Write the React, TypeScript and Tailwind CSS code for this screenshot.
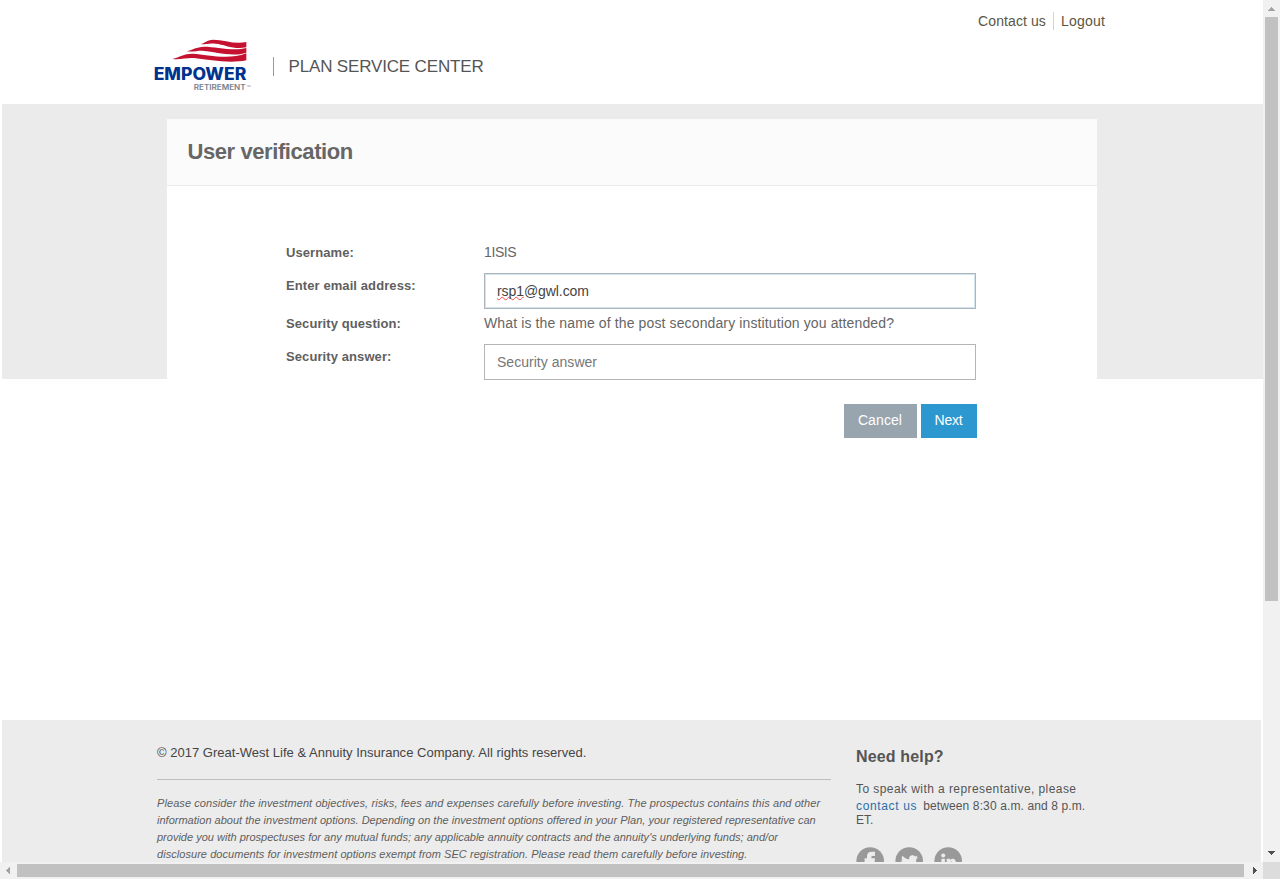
import type { ReactNode } from "react";

function Logo() {
  return (
    <svg width="104" height="56" viewBox="0 0 312 168" aria-label="Empower Retirement">
      <g fill="#c41230" transform="translate(-3 -3)">
        <path d="M145 24C162 21 162 12 184 11C216 11 248 26 283 18V34C246 42 218 25 190 23C174 22 164 26 145 24Z" />
        <path d="M104 46C124 41 132 33 156 32C192 32 242 46 283 36V50C242 64 188 47 156 45C138 43 126 49 104 46Z" />
        <path d="M61 69C84 63 94 53 122 53C166 55 226 74 283 52V73C232 84 170 71 132 67C106 64 88 72 61 69Z" />
      </g>
      <text x="2" y="130" fill="#00338d" className="font-[Inter] text-[50px] font-extrabold" textLength="278" lengthAdjust="spacingAndGlyphs">EMPOWER</text>
      <text x="122" y="159" fill="#76818d" className="font-[Inter] text-[23px] font-semibold" textLength="156" lengthAdjust="spacingAndGlyphs">RETIREMENT</text>
      <text x="281" y="149" fill="#76818d" className="font-[Inter] text-[8px]">TM</text>
    </svg>
  );
}

function Label({ children }: { children: ReactNode }) {
  return <div className="w-[198px] shrink-0 whitespace-nowrap pt-px text-[13px] font-bold leading-5 tracking-[0.09px] text-[#5f5f5f]">{children}</div>;
}

function Arrow({ points, color }: { points: string; color: string }) {
  return (
    <svg width="17" height="17" viewBox="0 0 17 17" className="shrink-0" shapeRendering="crispEdges">
      <polygon points={points} fill={color} />
    </svg>
  );
}

function Social({ children }: { children: ReactNode }) {
  return (
    <svg width="28" height="28" viewBox="0 0 28 28">
      <circle cx="14.2" cy="14" r="13.8" fill="#999" />
      <g fill="#ececec">{children}</g>
    </svg>
  );
}

export default function App() {
  return (
    <div className="flex h-[879px] w-[1280px] flex-col overflow-hidden bg-white font-['Liberation_Sans',Arial,sans-serif] text-sm text-[#666]">
      <div className="flex h-[862px]">
        <div className="flex w-[1263px] flex-col overflow-hidden">
          <header className="flex h-[104px] shrink-0 justify-between pl-[153px] pr-[158px]">
            <div className="flex pt-[37px]">
              <Logo />
              <div className="ml-4 mt-5 h-[19px] w-px bg-[#999]" />
              <div className="ml-[14.5px] mt-5 whitespace-nowrap text-[17px] leading-5 tracking-[-0.16px] text-[#555]">PLAN SERVICE CENTER</div>
            </div>
            <nav className="flex items-start pt-3 leading-[18px] text-[#5a5644]">
              <a className="whitespace-nowrap pr-[7px] tracking-[0.1px]">Contact us</a>
              <a className="border-l border-[#d4d4cc] pl-[7px] tracking-[0.2px]">Logout</a>
            </nav>
          </header>

          <main className="ml-[2px] h-[616px] shrink-0 bg-[linear-gradient(#ebebeb_275px,#fff_275px)] pl-[165px] pt-[15px]">
            <section className="h-[500px] w-[930px] bg-white">
              <h1 className="h-[67px] border-b border-[#eaeaea] bg-[#fbfbfb] pl-[20.5px] pt-5 text-[22px] font-bold leading-[26px] tracking-[-0.42px] text-[#666]">User verification</h1>
              <form className="w-[810px] pl-[119px] pt-14">
                <div className="flex h-[31px]">
                  <Label>Username:</Label>
                  <span className="leading-5 tracking-[-0.4px]">1ISIS</span>
                </div>
                <div className="flex h-10">
                  <div className="pt-[2px]"><Label>Enter email address:</Label></div>
                  <div className="flex h-9 w-[492px] items-center border border-[#abb5bb] pl-3 tracking-[-0.08px] text-[#444] shadow-[inset_0_0_0_1px_#d3e5ef]">
                    <span className="underline decoration-[#f44] decoration-wavy decoration-1 [text-decoration-skip-ink:none] [text-underline-offset:0px]">rsp1</span>@gwl.com
                  </div>
                </div>
                <div className="flex h-[31px]">
                  <Label>Security question:</Label>
                  <span className="whitespace-nowrap leading-5 tracking-[0.12px]">What is the name of the post secondary institution you attended?</span>
                </div>
                <div className="flex h-9">
                  <div className="pt-[2px]"><Label>Security answer:</Label></div>
                  <div className="flex h-9 w-[492px] items-center border border-[#b5b5b5] pl-3 tracking-[0.03px] text-[#777]">Security answer</div>
                </div>
                <div className="mt-6 flex justify-end gap-1 text-white">
                  <button type="button" className="h-[34px] w-[73px] bg-[#98a4ae] pb-[2px] pr-px tracking-[0.1px]">Cancel</button>
                  <button type="button" className="h-[34px] w-14 bg-[#2c98cf] pb-[2px] pr-px tracking-[-0.2px]">Next</button>
                </div>
              </form>
            </section>
          </main>

          <footer className="ml-[2px] flex h-[142px] w-[1259px] shrink-0 overflow-hidden bg-[#ececec] pl-[155px]">
            <div className="w-[674px] shrink-0">
              <p className="mt-6 h-[35px] whitespace-nowrap text-[13px] leading-[18px] tracking-[0.015px] text-[#444]">© 2017 Great-West Life &amp; Annuity Insurance Company. All rights reserved.</p>
              <hr className="border-[#bdbdbd]" />
              <div className="mt-[15px] whitespace-nowrap text-[11px] italic leading-[17px] text-[#5e5e5e]">
                <p className="tracking-[0.08px]">Please consider the investment objectives, risks, fees and expenses carefully before investing. The prospectus contains this and other</p>
                <p className="tracking-[0.01px]">information about the investment options. Depending on the investment options offered in your Plan, your registered representative can</p>
                <p className="tracking-[0.005px]">provide you with prospectuses for any mutual funds; any applicable annuity contracts and the annuity's underlying funds; and/or</p>
                <p className="tracking-[0.05px]">disclosure documents for investment options exempt from SEC registration. Please read them carefully before investing.</p>
              </div>
            </div>
            <div className="ml-[25px] whitespace-nowrap text-[12px] text-[#555]">
              <h2 className="mt-[27px] text-base font-bold leading-5 tracking-[0.15px]">Need help?</h2>
              <p className="mt-[13px] leading-[18px] tracking-[0.43px]">To speak with a representative, please</p>
              <p className="leading-4 tracking-[0.12px]"><a className="mr-[6px] tracking-[0.65px] text-[#2a6ea8]">contact us</a>between 8:30 a.m. and 8 p.m.</p>
              <p className="leading-[13px]">ET.</p>
              <div className="mt-5 flex gap-[11px]">
                <Social><path d="M11 28V15H8.6V11.2H11V9C11 6.3 12.8 4.8 15.5 4.8H19V9H16.8C15.7 9 15.4 9.5 15.4 10.4V11.2H19L18.6 15H15.4V28Z" /></Social>
                <Social><path d="M7.6 8.8C9.5 11 11.5 12.1 14.2 12.3C13.7 9.7 15.3 8.2 17.3 8.2C18.5 8.2 19.4 8.7 20.1 9.4L22.5 8.5L21.5 10.4L23.3 10L21.4 12C21.4 17 17 22.5 11.5 22.5C9.2 22.5 7.2 22 5.8 21C8 21.1 9.7 20.5 11 19.5C9.2 19.2 8 18.2 7.5 16.8H9.1C7.3 16.2 6.3 14.8 6.3 13L7.8 13.5C6.2 12.2 6.4 10.5 7.6 8.8Z" /></Social>
                <Social><circle cx="9.2" cy="8.6" r="2" /><path d="M7.4 11.8H10.9V22H7.4ZM12.7 11.8H16V13.2C18.2 10.4 22 11.6 22 15.8V22H18.5V16.5C18.5 13.9 16.2 14.1 16.2 16.5V22H12.7Z" /></Social>
              </div>
            </div>
          </footer>
        </div>
        <aside className="flex w-[17px] flex-col items-center bg-[#f1f1f1]">
          <Arrow points="5,11 12,11 8.5,7" color="#a3a3a3" />
          <div className="h-[584px] w-[13px] bg-[#c1c1c1]" />
          <div className="flex-1" />
          <Arrow points="5,6 12,6 8.5,10" color="#505050" />
        </aside>
      </div>
      <div className="flex h-[17px] items-center bg-[#f1f1f1]">
        <Arrow points="10,5 10,12 6,8.5" color="#a3a3a3" />
        <div className="h-[13px] w-[1227px] bg-[#c1c1c1]" />
        <div className="w-[2px]" />
        <Arrow points="7,5 7,12 11,8.5" color="#505050" />
        <div className="h-[17px] w-[17px] bg-[#dcdcdc]" />
      </div>
    </div>
  );
}
